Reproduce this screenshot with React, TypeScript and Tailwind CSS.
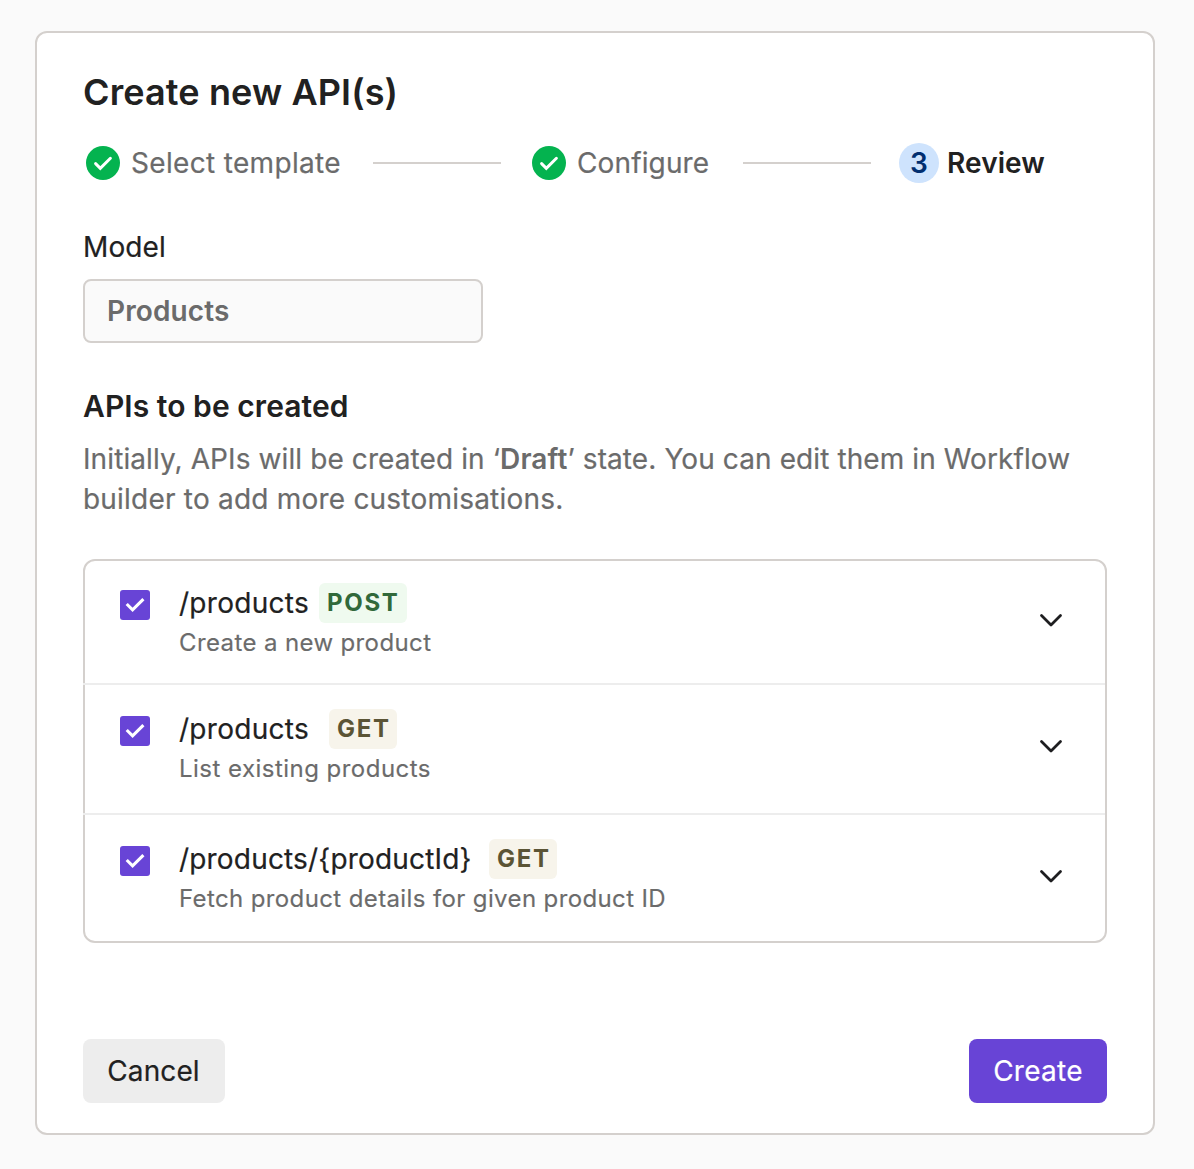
import React from "react";

function DoneBadge() {
  return (
    <svg className="h-10 w-10 shrink-0" viewBox="0 0 40 40" fill="none">
      <circle cx="20" cy="20" r="17" fill="#04B34F" />
      <path d="M12.6 20.6L17.3 25.3L27.4 15.3" stroke="white" strokeWidth="3" strokeLinecap="round" strokeLinejoin="miter" />
    </svg>
  );
}

function Checkbox() {
  return (
    <span className="mt-[7px] flex h-[30px] w-[30px] shrink-0 items-center justify-center rounded-[3px] bg-[#6844D6]">
      <svg className="h-[30px] w-[30px]" viewBox="0 0 30 30" fill="none">
        <path d="M6.7 14L12.6 19.9L23.4 9.1" stroke="white" strokeWidth="3.1" />
      </svg>
    </span>
  );
}

function Chevron() {
  return (
    <svg className="mt-[25px] h-6 w-6 shrink-0" viewBox="0 0 24 24" fill="none">
      <path d="M2.5 7.5L12 17L21.5 7.5" stroke="#1E1E20" strokeWidth="2.8" strokeLinecap="round" strokeLinejoin="round" />
    </svg>
  );
}

type Api = { path: string; method: string; text: string; row: string; tag: string; label: string; desc: string };

const apis: Api[] = [
  { path: "/products", method: "POST", text: "Create a new product", row: "h-[126px] border-b-2", label: "tracking-[0.28px]", desc: "tracking-[0.38px]", tag: "ml-[10px] w-[88px] bg-[#EFFAEF] text-[#31693A]" },
  { path: "/products", method: "GET", text: "List existing products", row: "h-[130px] border-b-2", label: "tracking-[0.28px]", desc: "tracking-[0.47px]", tag: "ml-[20px] w-[68px] bg-[#F7F4EB] text-[#5B5435]" },
  { path: "/products/{productId}", method: "GET", text: "Fetch product details for given product ID", row: "h-[126px]", label: "w-[292px] tracking-[0.18px]", desc: "tracking-[0.38px]", tag: "ml-[18px] w-[68px] bg-[#F7F4EB] text-[#5B5435]" },
];

function ApiRow({ api }: { api: Api }) {
  return (
    <div className={"-ml-0.5 flex items-start border-[#EDEDED] pt-6 pl-[37px] pr-[42px] " + api.row}>
      <Checkbox />
      <div className="ml-[29px] flex-1">
        <div className="flex h-10 items-center whitespace-nowrap">
          <span className={api.label}>{api.path}</span>
          <span className={"flex h-10 items-center rounded-md pl-2 pb-px text-2xl font-bold tracking-[1.7px] [-webkit-text-stroke:0] " + api.tag}>
            {api.method}
          </span>
        </div>
        <p className={"text-2xl leading-10 text-[#6B6B6B] [-webkit-text-stroke:0.15px] " + api.desc}>{api.text}</p>
      </div>
      <Chevron />
    </div>
  );
}

export default function App() {
  return (
    <div className="h-[1169px] w-[1194px] overflow-hidden bg-[#FAFAFA] pt-[31px] pl-[35px] font-['Inter',sans-serif] text-[28px] leading-10 tracking-[0.1px] text-[#212121] [-webkit-text-stroke:0.2px]">
      <main className="h-[1104px] w-[1120px] rounded-xl border-2 border-[#D4D0CD] bg-white px-[46px] pt-[34px]">
        <h1 className="text-4xl leading-[50px] font-semibold tracking-[0.12px] [-webkit-text-stroke:0]">Create new API(s)</h1>

        <div className="mt-[26px] flex h-10 items-center whitespace-nowrap text-[#6B6B6B]">
          <div className="flex w-[290px] items-center">
            <DoneBadge />
            <span className="ml-2 tracking-[0.33px]">Select template</span>
          </div>
          <div className="h-0.5 w-32 bg-[#D4D0CD]" />
          <div className="ml-7 flex w-[214px] items-center">
            <DoneBadge />
            <span className="ml-2 tracking-[0.13px]">Configure</span>
          </div>
          <div className="h-0.5 w-32 bg-[#D4D0CD]" />
          <span className="ml-7 flex h-10 w-10 items-center justify-center rounded-full bg-[#CEE3FD] font-semibold text-[#012E70] [-webkit-text-stroke:0]">3</span>
          <span className="ml-2 font-semibold text-[#212121] [-webkit-text-stroke:0]">Review</span>
        </div>

        <div className="mt-11">Model</div>
        <div className="mt-3 flex h-16 w-[400px] items-center rounded-lg border-2 border-[#D4D0CD] bg-[#FAFAFA] pl-[22px] font-semibold text-[#6B6B6B] [-webkit-text-stroke:0]">
          Products
        </div>

        <h2 className="mt-[43px] text-[30px] leading-10 font-semibold tracking-[0.06px] [-webkit-text-stroke:0]">APIs to be created</h2>
        <p className="mt-[13px] whitespace-nowrap text-[#6B6B6B]">
          <span className="tracking-[0.095px]">
            Initially, APIs will be created in ‘<b className="font-semibold [-webkit-text-stroke:0]">Draft</b>’ state. You can edit them in Workflow
          </span>
          <br />
          <span className="tracking-[0.21px]">builder to add more customisations.</span>
        </p>

        <div className="mt-10 h-[384px] rounded-xl border-2 border-[#D4D0CD]">
          <div className="-mt-0.5">
            {apis.map((api) => (
              <ApiRow key={api.path + api.method} api={api} />
            ))}
          </div>
        </div>

        <div className="mt-24 flex justify-between">
          <button className="h-16 w-[142px] rounded-lg bg-[#EDEDED] pr-px">Cancel</button>
          <button className="h-16 w-[138px] rounded-lg bg-[#6844D6] tracking-[0.28px] text-white">Create</button>
        </div>
      </main>
    </div>
  );
}
